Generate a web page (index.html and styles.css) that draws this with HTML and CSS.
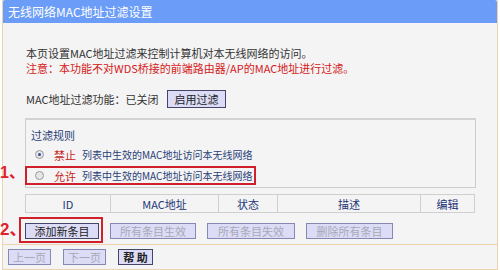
FILE: index.html
```html
<!DOCTYPE html>
<html lang="zh-CN">
<head>
  <meta charset="UTF-8">
  <title>无线网络MAC地址过滤设置</title>
  <link rel="stylesheet" href="styles.css">
</head>
<body>
  <div class="panel">
    <div class="title">无线网络MAC地址过滤设置</div>

    <div class="content">
      <p class="intro">
        本页设置MAC地址过滤来控制计算机对本无线网络的访问。<br>
        <span class="warn">注意：本功能不对WDS桥接的前端路由器/AP的MAC地址进行过滤。</span>
      </p>

      <div class="status-row">
        <span class="status-text">MAC地址过滤功能：已关闭</span>
        <button class="btn btn-enable">启用过滤</button>
      </div>

      <div class="rules">
        <div class="rules-title">过滤规则</div>
        <div class="rule">
          <span class="radio checked"></span>
          <span class="red">禁止</span>
          <span>列表中生效的MAC地址访问本无线网络</span>
        </div>
        <div class="rule marked">
          <span class="note">1、</span>
          <span class="radio"></span>
          <span class="red">允许</span>
          <span>列表中生效的MAC地址访问本无线网络</span>
        </div>
      </div>

      <table class="list">
        <tr>
          <th class="col-id">ID</th>
          <th class="col-mac">MAC地址</th>
          <th class="col-state">状态</th>
          <th class="col-desc">描述</th>
          <th class="col-edit">编辑</th>
        </tr>
      </table>

      <div class="actions">
        <span class="marked-btn">
          <span class="note">2、</span>
          <button class="btn btn-add">添加新条目</button>
        </span>
        <button class="btn off w86">所有条目生效</button>
        <button class="btn off w88">所有条目失效</button>
        <button class="btn off w87">删除所有条目</button>
      </div>
    </div>

    <div class="footer">
      <button class="btn off w42">上一页</button>
      <button class="btn off w42">下一页</button>
      <button class="btn btn-help">帮 助</button>
    </div>
  </div>
</body>
</html>
```

FILE: styles.css
```css
* { box-sizing: border-box; }
body {
  margin: 0;
  padding: 0 2px;
  background: #fff;
  font-family: "Noto Sans CJK SC", "DejaVu Sans", sans-serif;
  font-size: 11px;
  color: #333;
}
.panel {
  width: 496px;
  background: #f4f4f4;
  border-left: 1px solid #ecd3ad;
  border-right: 1px solid #ecd3ad;
  border-bottom: 1px solid #ecd3ad;
}
.title {
  height: 23px;
  line-height: 23px;
  padding-left: 5px;
  background: #6a9cf8;
  color: #fff;
  font-size: 12px;
  border-radius: 2px 2px 0 0;
}
.content {
  padding: 23px 21px 0 22px;
}
.intro {
  margin: 0 0 0 1px;
  line-height: 15px;
}
.warn { color: #d42020; }
.red { color: #c81e1e; }

.status-row {
  display: flex;
  align-items: center;
  margin-top: 14px;
  height: 18px;
  padding-left: 1px;
}
.status-text { width: 141px; }

.btn {
  font-family: "Noto Sans CJK SC", sans-serif;
  font-size: 11px;
  height: 16px;
  line-height: 14px;
  padding: 0;
  margin: 0;
  background: #dcdcf7;
  border: 1px solid #45456a;
  color: #222;
  cursor: pointer;
}
.btn-enable { width: 59px; height: 18px; }
.btn-add { width: 74px; }
.btn-help { width: 35px; font-weight: bold; }
.btn.off {
  border-color: #8787b4;
  color: #a8a8b8;
  cursor: default;
}
.w86 { width: 86px; }
.w87 { width: 87px; }
.w88 { width: 88px; }
.w42 { width: 43px; }

.rules {
  margin-top: 10px;
  height: 70px;
  border: 1px solid #cccccc;
  border-top: 2px solid #d2d2d2;
  padding-top: 8px;
}
.rules-title {
  padding-left: 5px;
  line-height: 14px;
  color: #2a3f78;
}
.rule {
  display: flex;
  align-items: center;
  height: 19px;
  margin-top: 3px;
  padding-left: 9px;
  font-size: 10px;
  white-space: nowrap;
  color: #2a3f78;
}
.rule .red { font-size: 11px; margin: 0 6px 0 10px; }
.rule.marked {
  position: relative;
  width: 231px;
  margin-top: 2px;
  margin-left: -1px;
  padding-left: 8px;
  border: 2px solid #d0202c;
}
.radio {
  flex: none;
  width: 9px;
  height: 9px;
  border-radius: 50%;
  border: 1px solid #9a9a9a;
  background: #e6e6e6;
  position: relative;
}
.radio.checked::after {
  content: "";
  position: absolute;
  left: 2px;
  top: 2px;
  width: 3px;
  height: 3px;
  border-radius: 50%;
  background: #2a4f9a;
}
.note {
  position: absolute;
  left: -27px;
  top: -9px;
  color: #e0202a;
  font-family: "Liberation Sans", "Noto Sans CJK SC", sans-serif;
  font-weight: bold;
  font-size: 16px;
}

.list {
  width: 450px;
  margin-top: 6px;
  border-collapse: collapse;
}
.list th {
  height: 18px;
  padding: 0;
  border: 1px solid #cfcfcf;
  font-weight: normal;
  color: #1e3576;
  background: #f4f4f4;
}
.col-id { width: 85px; }
.col-mac { width: 108px; }
.col-state { width: 59px; }
.col-desc { width: 143px; }

.actions {
  display: flex;
  gap: 11px;
  margin-top: 10px;
  padding-bottom: 5px;
}
.marked-btn {
  position: relative;
  display: inline-block;
  margin: -6px -4px -4px -6px;
  padding: 4px 2px 2px 4px;
  border: 2px solid #d0202c;
}
.marked-btn .note { left: -21px; top: -4px; font-size: 17px; }

.footer {
  display: flex;
  gap: 12px;
  padding: 4px 0 4px 5px;
  border-top: 1px solid #ecd3ad;
}
```
